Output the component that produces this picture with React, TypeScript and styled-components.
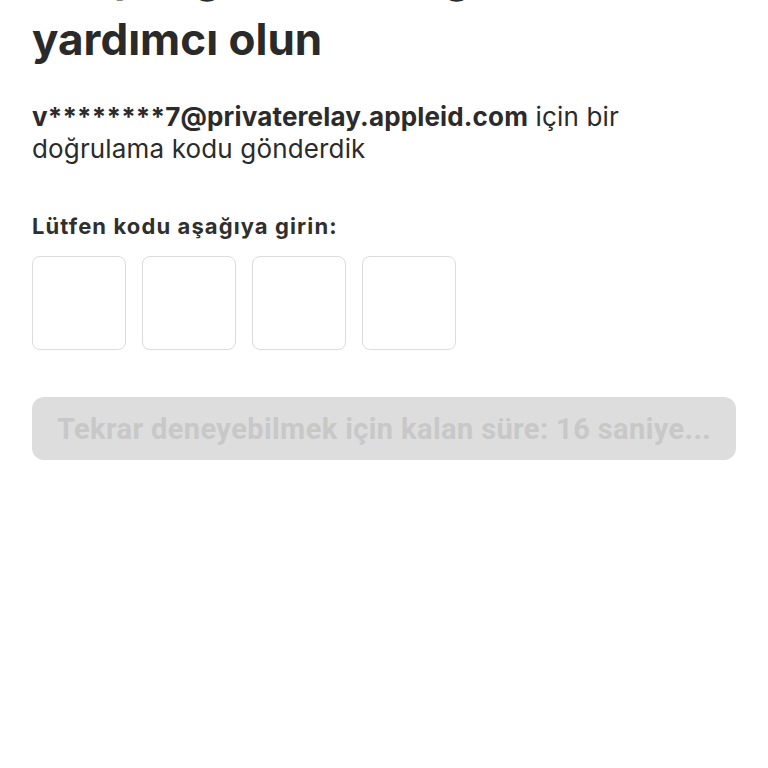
import styled, { createGlobalStyle } from "styled-components";

const GlobalStyle = createGlobalStyle`
  html, body {
    margin: 0;
    padding: 0;
    background: #ffffff;
  }
  body {
    font-family: Inter, "Liberation Sans", Arial, sans-serif;
    color: #2b2b2b;
    overflow: hidden;
  }
`;

const Page = styled.main`
  padding: 0 32px;
  width: 768px;
  box-sizing: border-box;
`;

const Title = styled.h1`
  margin: -55px 0 0;
  font-size: 44px;
  line-height: 63px;
  font-weight: 700;
  letter-spacing: 0;
  color: #2a2a2a;
`;

const Info = styled.p`
  margin: 30px 0 0;
  font-size: 26px;
  line-height: 32px;
  font-weight: 400;
  letter-spacing: 0.15px;
  color: #2b2b2b;

  strong {
    font-weight: 700;
  }
`;

const Label = styled.p`
  margin: 48px 0 0;
  font-size: 22px;
  line-height: 26px;
  font-weight: 700;
  letter-spacing: 1.1px;
  color: #2f2f2f;
`;

const CodeRow = styled.div`
  display: flex;
  gap: 16px;
  margin-top: 17px;
`;

const CodeBox = styled.input`
  width: 94px;
  height: 94px;
  box-sizing: border-box;
  border: 1.5px solid #dcdcdc;
  border-radius: 8px;
  background: #ffffff;
  font-family: inherit;
  font-size: 36px;
  text-align: center;
  outline: none;
  padding: 0;
`;

const RetryButton = styled.button`
  display: flex;
  align-items: center;
  justify-content: center;
  width: 100%;
  height: 63px;
  margin-top: 47px;
  border: none;
  border-radius: 12px;
  background: #dddddd;
  color: #c8c8c8;
  font-family: Roboto, "Liberation Sans", sans-serif;
  font-size: 29px;
  font-weight: 700;
  letter-spacing: 0.4px;
  cursor: default;
`;

export default function App() {
  return (
    <>
      <GlobalStyle />
      <Page>
        <Title>Giriş bilgilerinizi doğrulamamıza yardımcı olun</Title>
        <Info>
          <strong>v********7@privaterelay.appleid.com</strong> için bir doğrulama kodu
          gönderdik
        </Info>
        <Label>Lütfen kodu aşağıya girin:</Label>
        <CodeRow>
          {[0, 1, 2, 3].map((i) => (
            <CodeBox key={i} type="text" inputMode="numeric" maxLength={1} aria-label={`Kod ${i + 1}`} />
          ))}
        </CodeRow>
        <RetryButton disabled>Tekrar deneyebilmek için kalan süre: 16 saniye...</RetryButton>
      </Page>
    </>
  );
}
